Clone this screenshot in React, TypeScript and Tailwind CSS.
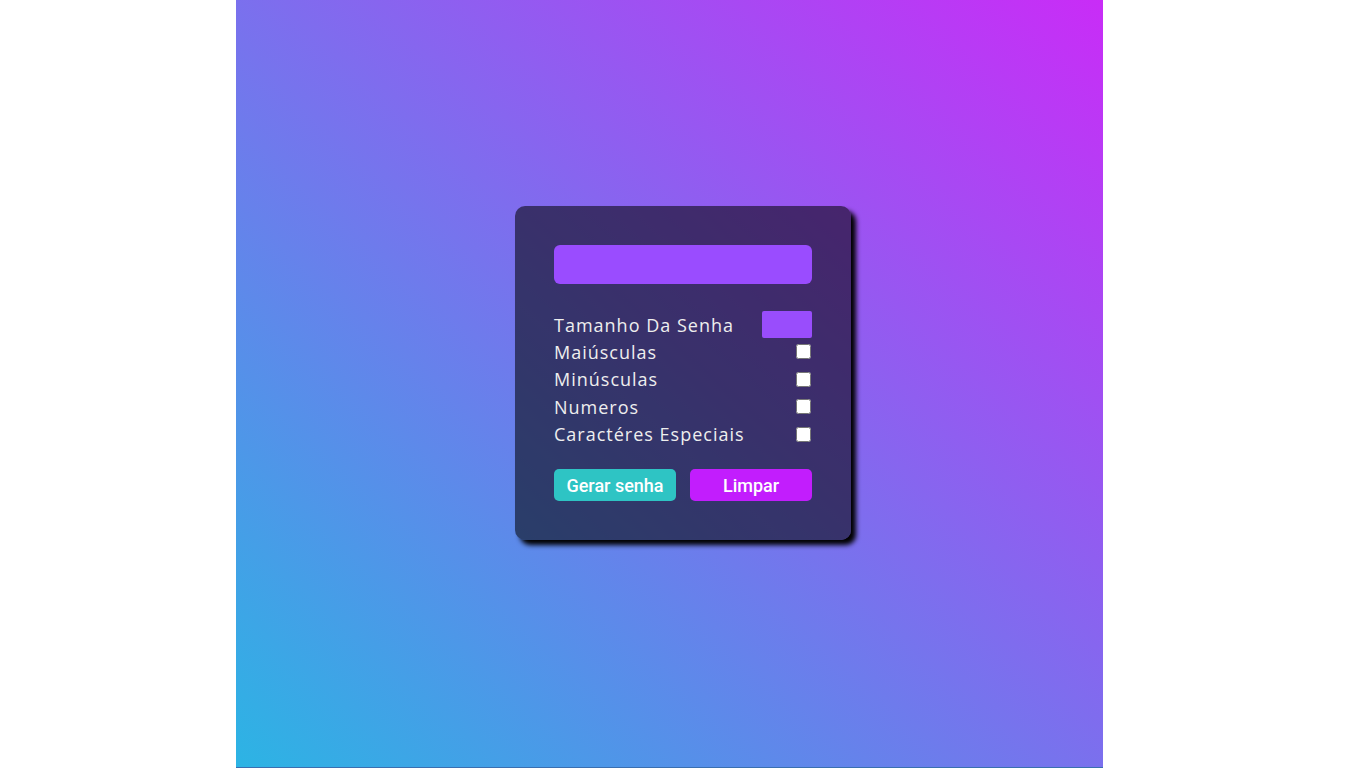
import React from "react";

export default function App() {
  const rows = ["Maiúsculas", "Minúsculas", "Numeros", "Caractéres Especiais"];
  return (
    <div className="w-full h-[768px] bg-white flex">
      <div className="ml-[236px] w-[867px] h-[768px] bg-[linear-gradient(to_top_right,#2cb4e4,#c92cf7)] border-b border-[#3a6fb0] pl-[279px] pt-[206px]">
        <div
          className="w-[336px] h-[334px] rounded-[10px] bg-black/55 shadow-[5px_5px_5px_#000] px-[39px] pt-[39px] text-[#eeeeee]"
          style={{ fontFamily: '"Open Sans", "Noto Sans", sans-serif' }}
        >
          <div className="w-[258px] h-[39px] rounded-[6px] bg-[#9a4cff]" />
          <div className="mt-[27px]">
            <div className="flex items-center justify-between h-[27px]">
              <span className="text-[18px] leading-none font-medium tracking-[1px]">Tamanho Da Senha</span>
              <div className="w-[50px] h-[27px] rounded-[2px] bg-[#994dfc]" />
            </div>
            {rows.map((r) => (
              <div key={r} className="flex items-center justify-between h-[27.5px]">
                <span className="text-[18px] leading-none font-medium tracking-[1px]">{r}</span>
                <input type="checkbox" className="w-[15px] h-[15px] m-0 mr-px" />
              </div>
            ))}
          </div>
          <div
            className="flex gap-[14px] mt-[21px]"
            style={{ fontFamily: "Roboto, sans-serif" }}
          >
            <button className="w-[122px] h-[32px] rounded-[5px] bg-[#2ec4c4] text-white text-[18px] font-medium">
              Gerar senha
            </button>
            <button className="w-[122px] h-[32px] rounded-[5px] bg-[#c21dfd] text-white text-[18px] font-medium">
              Limpar
            </button>
          </div>
        </div>
      </div>
    </div>
  );
}
